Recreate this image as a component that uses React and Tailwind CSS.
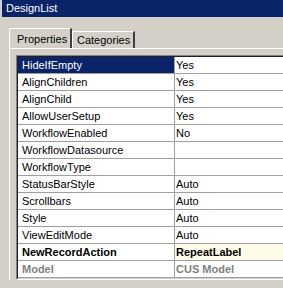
const rows = [
  { name: "HideIfEmpty", value: "Yes", selected: true },
  { name: "AlignChildren", value: "Yes" },
  { name: "AlignChild", value: "Yes" },
  { name: "AllowUserSetup", value: "Yes" },
  { name: "WorkflowEnabled", value: "No" },
  { name: "WorkflowDatasource", value: "" },
  { name: "WorkflowType", value: "" },
  { name: "StatusBarStyle", value: "Auto" },
  { name: "Scrollbars", value: "Auto" },
  { name: "Style", value: "Auto" },
  { name: "ViewEditMode", value: "Auto" },
  { name: "NewRecordAction", value: "RepeatLabel", bold: true, highlight: true },
  { name: "Model", value: "CUS Model", bold: true, disabled: true },
];

function Row({ row }) {
  const text = row.disabled ? "text-[#808080]" : "text-black";
  const weight = row.bold ? "font-bold" : "font-normal";
  return (
    <div className="flex h-[17px] border-b border-[#a0a0a0]">
      <div
        className={
          "w-[156px] shrink-0 pl-[4px] leading-[16px] whitespace-nowrap " +
          weight +
          " " +
          (row.selected ? "bg-[#0a246a] text-white" : "bg-white " + text)
        }
      >
        {row.name}
      </div>
      <div className="w-px shrink-0 bg-[#a0a0a0]" />
      <div
        className={
          "flex-1 pl-[1px] leading-[16px] whitespace-nowrap " +
          weight +
          " " +
          text +
          " " +
          (row.highlight ? "bg-[#fffbe8]" : "bg-white")
        }
      >
        {row.value}
      </div>
    </div>
  );
}

export default function App() {
  return (
    <div
      className="w-[283px] h-[288px] overflow-hidden bg-[#d4d0c8] text-[11px]"
      style={{ fontFamily: '"Liberation Sans", Arial, sans-serif' }}
    >
      {/* Title bar */}
      <div className="ml-[2px] h-[17px] bg-[#0a246a] pl-[4px] leading-[17px] text-white">
        DesignList
      </div>

      {/* Tabs */}
      <div className="mt-[11px] ml-[9px] flex items-end h-[20px]">
        <div className="h-[20px] w-[63px] rounded-tl-[2px] border-t border-l border-white border-r-2 border-r-[#404040] pl-[7px] pt-[3px] leading-[14px] text-black">
          Properties
        </div>
        <div className="h-[17px] w-[63px] rounded-tl-[2px] border-t border-l border-white border-r-2 border-r-[#404040] pl-[4px] pt-[1px] leading-[14px] text-black">
          Categories
        </div>
      </div>

      {/* Panel */}
      <div className="ml-[9px] w-[400px] border-t border-l border-white pl-[6px] pt-[6px]">
        <div className="w-[380px] border-t border-l border-[#808080] border-b border-b-white">
          <div className="border-t border-l border-[#202020] border-b border-b-[#d4d0c8]">
            {rows.map((r) => (
              <Row key={r.name} row={r} />
            ))}
          </div>
        </div>
      </div>
    </div>
  );
}
